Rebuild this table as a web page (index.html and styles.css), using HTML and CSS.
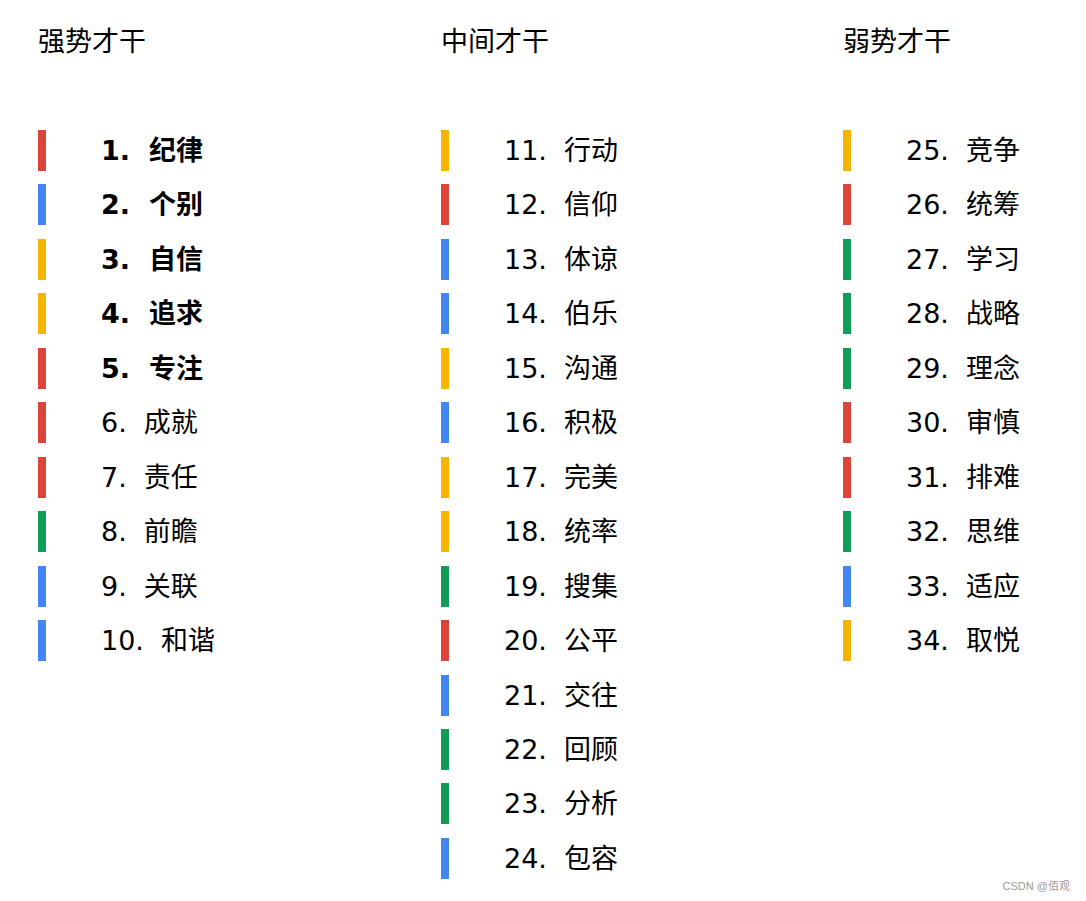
FILE: index.html
```html
<!DOCTYPE html>
<html lang="zh">
<head>
<meta charset="utf-8">
<link rel="stylesheet" href="styles.css">
</head>
<body>
<div class="page">
  <section class="col">
    <h2 class="head">强势才干</h2>
    <ul class="list">
      <li class="item strong"><span class="bar red"></span><span class="num">1.</span><span class="name">纪律</span></li>
      <li class="item strong"><span class="bar blue"></span><span class="num">2.</span><span class="name">个别</span></li>
      <li class="item strong"><span class="bar yellow"></span><span class="num">3.</span><span class="name">自信</span></li>
      <li class="item strong"><span class="bar yellow"></span><span class="num">4.</span><span class="name">追求</span></li>
      <li class="item strong"><span class="bar red"></span><span class="num">5.</span><span class="name">专注</span></li>
      <li class="item"><span class="bar red"></span><span class="num">6.</span><span class="name">成就</span></li>
      <li class="item"><span class="bar red"></span><span class="num">7.</span><span class="name">责任</span></li>
      <li class="item"><span class="bar green"></span><span class="num">8.</span><span class="name">前瞻</span></li>
      <li class="item"><span class="bar blue"></span><span class="num">9.</span><span class="name">关联</span></li>
      <li class="item"><span class="bar blue"></span><span class="num">10.</span><span class="name">和谐</span></li>
    </ul>
  </section>
  <section class="col">
    <h2 class="head">中间才干</h2>
    <ul class="list">
      <li class="item"><span class="bar yellow"></span><span class="num">11.</span><span class="name">行动</span></li>
      <li class="item"><span class="bar red"></span><span class="num">12.</span><span class="name">信仰</span></li>
      <li class="item"><span class="bar blue"></span><span class="num">13.</span><span class="name">体谅</span></li>
      <li class="item"><span class="bar blue"></span><span class="num">14.</span><span class="name">伯乐</span></li>
      <li class="item"><span class="bar yellow"></span><span class="num">15.</span><span class="name">沟通</span></li>
      <li class="item"><span class="bar blue"></span><span class="num">16.</span><span class="name">积极</span></li>
      <li class="item"><span class="bar yellow"></span><span class="num">17.</span><span class="name">完美</span></li>
      <li class="item"><span class="bar yellow"></span><span class="num">18.</span><span class="name">统率</span></li>
      <li class="item"><span class="bar green"></span><span class="num">19.</span><span class="name">搜集</span></li>
      <li class="item"><span class="bar red"></span><span class="num">20.</span><span class="name">公平</span></li>
      <li class="item"><span class="bar blue"></span><span class="num">21.</span><span class="name">交往</span></li>
      <li class="item"><span class="bar green"></span><span class="num">22.</span><span class="name">回顾</span></li>
      <li class="item"><span class="bar green"></span><span class="num">23.</span><span class="name">分析</span></li>
      <li class="item"><span class="bar blue"></span><span class="num">24.</span><span class="name">包容</span></li>
    </ul>
  </section>
  <section class="col">
    <h2 class="head">弱势才干</h2>
    <ul class="list">
      <li class="item"><span class="bar yellow"></span><span class="num">25.</span><span class="name">竞争</span></li>
      <li class="item"><span class="bar red"></span><span class="num">26.</span><span class="name">统筹</span></li>
      <li class="item"><span class="bar green"></span><span class="num">27.</span><span class="name">学习</span></li>
      <li class="item"><span class="bar green"></span><span class="num">28.</span><span class="name">战略</span></li>
      <li class="item"><span class="bar green"></span><span class="num">29.</span><span class="name">理念</span></li>
      <li class="item"><span class="bar red"></span><span class="num">30.</span><span class="name">审慎</span></li>
      <li class="item"><span class="bar red"></span><span class="num">31.</span><span class="name">排难</span></li>
      <li class="item"><span class="bar green"></span><span class="num">32.</span><span class="name">思维</span></li>
      <li class="item"><span class="bar blue"></span><span class="num">33.</span><span class="name">适应</span></li>
      <li class="item"><span class="bar yellow"></span><span class="num">34.</span><span class="name">取悦</span></li>
    </ul>
  </section>
</div>
<div class="watermark">CSDN @佰观</div>
</body>
</html>
```
FILE: styles.css
```css
html, body {
  margin: 0;
  padding: 0;
  background: #ffffff;
}
body {
  width: 1086px;
  height: 901px;
  position: relative;
  overflow: hidden;
  font-family: "DejaVu Sans", "Noto Sans CJK SC", sans-serif;
  color: #000;
}
.page {
  display: grid;
  grid-template-columns: 403px 402px 243px;
  padding: 0 0 0 38px;
}
.col {
  display: flex;
  flex-direction: column;
}
.head {
  margin: 0;
  padding-top: 22px;
  height: 130px;
  box-sizing: border-box;
  font-size: 27px;
  font-weight: normal;
  line-height: 36px;
  font-family: "Noto Sans CJK SC", sans-serif;
}
.list {
  list-style: none;
  margin: 0;
  padding: 0;
}
.item {
  display: flex;
  align-items: center;
  height: 54.46px;
  font-size: 27px;
  line-height: 41px;
}
.bar {
  width: 8px;
  height: 41px;
  align-self: flex-start;
  flex: none;
}
.num {
  margin-left: 55px;
  margin-right: 17px;
  align-self: flex-start;
}
.name {
  align-self: flex-start;
}
.strong {
  font-weight: bold;
}
.strong .num {
  margin-right: 19px;
}
.red { background: #DB4437; }
.blue { background: #4285F4; }
.yellow { background: #F4B400; }
.green { background: #0F9D58; }
.watermark {
  position: absolute;
  right: 16px;
  bottom: 8px;
  font-family: "Liberation Sans", "Noto Sans CJK SC", sans-serif;
  font-size: 11px;
  color: #999;
}
```
